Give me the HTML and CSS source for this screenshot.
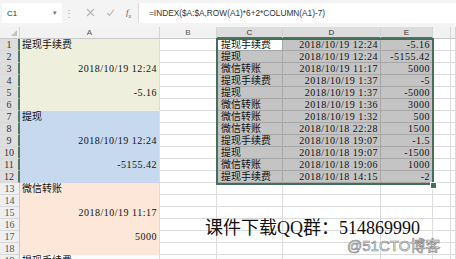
FILE: index.html
```html
<!DOCTYPE html>
<html lang="zh-CN">
<head>
    <meta charset="UTF-8">
    <meta name="viewport" content="width=device-width, initial-scale=1.0">
    <title>INDEX</title>
    <link rel="stylesheet" href="styles.css">
</head>
<body>
<div class="app">
    <div class="formula-bar">
        <div class="name-box"><span>C1</span><span class="arrow">&#9662;</span></div>
        <div class="bar-dots">&#8942;</div>
        <div class="bar-icons">
            <svg width="9" height="9" viewBox="0 0 9 9"><path d="M1 1L8 8M8 1L1 8" stroke="#b4b4b4" stroke-width="1.1" fill="none"/></svg>
            <svg width="9" height="9" viewBox="0 0 9 9"><path d="M1 5L3.5 7.5L8 1.5" stroke="#b4b4b4" stroke-width="1.1" fill="none"/></svg>
            <span class="fx">f<sub>x</sub></span>
        </div>
        <div class="formula">=INDEX($A:$A,ROW(A1)*6+2*COLUMN(A1)-7)</div>
    </div>

    <div class="sheet">
        <div class="row head">
            <div class="corner"></div>
            <div>A</div><div>B</div><div class="on">C</div><div class="on">D</div><div class="on">E</div><div></div><div></div>
        </div>
        <div class="row">
            <div class="rh on">1</div><div class="a g">提现手续费</div><div></div>
            <div class="s active">提现手续费</div><div class="s n">2018/10/19 12:24</div><div class="s n">-5.16</div><div></div><div></div>
        </div>
        <div class="row">
            <div class="rh on">2</div><div class="a g"></div><div></div>
            <div class="s">提现</div><div class="s n">2018/10/19 12:24</div><div class="s n">-5155.42</div><div></div><div></div>
        </div>
        <div class="row">
            <div class="rh on">3</div><div class="a g n">2018/10/19 12:24</div><div></div>
            <div class="s">微信转账</div><div class="s n">2018/10/19 11:17</div><div class="s n">5000</div><div></div><div></div>
        </div>
        <div class="row">
            <div class="rh on">4</div><div class="a g"></div><div></div>
            <div class="s">提现手续费</div><div class="s n">2018/10/19 1:37</div><div class="s n">-5</div><div></div><div></div>
        </div>
        <div class="row">
            <div class="rh on">5</div><div class="a g n">-5.16</div><div></div>
            <div class="s">提现</div><div class="s n">2018/10/19 1:37</div><div class="s n">-5000</div><div></div><div></div>
        </div>
        <div class="row">
            <div class="rh on">6</div><div class="a g"></div><div></div>
            <div class="s">微信转账</div><div class="s n">2018/10/19 1:36</div><div class="s n">3000</div><div></div><div></div>
        </div>
        <div class="row">
            <div class="rh on">7</div><div class="a b">提现</div><div></div>
            <div class="s">微信转账</div><div class="s n">2018/10/19 1:32</div><div class="s n">500</div><div></div><div></div>
        </div>
        <div class="row">
            <div class="rh on">8</div><div class="a b"></div><div></div>
            <div class="s">微信转账</div><div class="s n">2018/10/18 22:28</div><div class="s n">1500</div><div></div><div></div>
        </div>
        <div class="row">
            <div class="rh on">9</div><div class="a b n">2018/10/19 12:24</div><div></div>
            <div class="s">提现手续费</div><div class="s n">2018/10/18 19:07</div><div class="s n">-1.5</div><div></div><div></div>
        </div>
        <div class="row">
            <div class="rh on">10</div><div class="a b"></div><div></div>
            <div class="s">提现</div><div class="s n">2018/10/18 19:07</div><div class="s n">-1500</div><div></div><div></div>
        </div>
        <div class="row">
            <div class="rh on">11</div><div class="a b n">-5155.42</div><div></div>
            <div class="s">微信转账</div><div class="s n">2018/10/18 19:06</div><div class="s n">1000</div><div></div><div></div>
        </div>
        <div class="row">
            <div class="rh on">12</div><div class="a b"></div><div></div>
            <div class="s">提现手续费</div><div class="s n">2018/10/18 14:15</div><div class="s n">-2</div><div></div><div></div>
        </div>
        <div class="row">
            <div class="rh">13</div><div class="a p">微信转账</div><div></div><div></div><div></div><div></div><div></div><div></div>
        </div>
        <div class="row">
            <div class="rh">14</div><div class="a p"></div><div></div><div></div><div></div><div></div><div></div><div></div>
        </div>
        <div class="row">
            <div class="rh">15</div><div class="a p n">2018/10/19 11:17</div><div></div><div></div><div></div><div></div><div></div><div></div>
        </div>
        <div class="row">
            <div class="rh">16</div><div class="a p"></div><div></div><div></div><div></div><div></div><div></div><div></div>
        </div>
        <div class="row">
            <div class="rh">17</div><div class="a p n">5000</div><div></div><div></div><div></div><div></div><div></div><div></div>
        </div>
        <div class="row">
            <div class="rh">18</div><div class="a p"></div><div></div><div></div><div></div><div></div><div></div><div></div>
        </div>
        <div class="row">
            <div class="rh">19</div><div class="a">提现手续费</div><div></div><div></div><div></div><div></div><div></div><div></div>
        </div>

        <div class="selection"></div>
        <div class="handle"></div>
    </div>

    <div class="note">课件下载QQ群：514869990</div>
    <div class="mark">@51CTO博客</div>
</div>
</body>
</html>
```

FILE: styles.css
```css
body {
    margin: 0;
    background: #fff;
    font-family: "Liberation Serif", "Noto Sans CJK SC", serif;
    color: #111;
}

.app {
    position: relative;
    width: 456px;
    height: 259px;
    overflow: hidden;
}

/* formula bar */
.formula-bar {
    display: flex;
    align-items: center;
    height: 27px;
    padding: 3px 0 4px 2px;
    box-sizing: border-box;
    background: #f4f4f4;
    font-family: "Liberation Sans", sans-serif;
    font-size: 8px;
    color: #333;
}

.name-box {
    display: flex;
    align-items: center;
    justify-content: space-between;
    width: 60px;
    height: 20px;
    padding: 0 5px;
    box-sizing: border-box;
    background: #fff;
}

.arrow {
    color: #777;
    font-size: 7px;
}

.bar-dots {
    width: 14px;
    text-align: center;
    color: #aaa;
    font-size: 10px;
}

.bar-icons {
    display: flex;
    align-items: center;
    gap: 11px;
    width: 52px;
    padding-left: 10px;
}

.fx {
    font-family: "Liberation Serif", serif;
    font-style: italic;
    font-size: 9px;
    color: #555;
}

.fx sub {
    font-size: 6px;
}

.formula {
    flex: 1;
    height: 20px;
    line-height: 20px;
    padding-left: 10px;
    background: #fff;
    border-left: 1px solid #dadada;
    font-size: 8.3px;
    white-space: nowrap;
}

/* sheet */
.sheet {
    position: relative;
}

.row {
    display: grid;
    grid-template-columns: 20px 140px 57px 66px 98px 52px 18px 1fr;
    height: 12px;
}

.row > div {
    height: 12px;
    line-height: 12px;
    padding: 0 2px;
    box-sizing: border-box;
    border-right: 1px solid #dcdcdc;
    border-bottom: 1px solid #dcdcdc;
    font-size: 10px;
    white-space: nowrap;
}

.head > div {
    background: #f2f2f2;
    border-right-color: #d4d4d4;
    border-bottom-color: #c8c8c8;
    text-align: center;
    font-family: "Liberation Sans", sans-serif;
    font-size: 8px;
    color: #555;
}

.head > div.on {
    background: #dcdcdc;
    border-bottom: 2px solid #4f7a62;
    color: #333;
}

.head .corner {
    position: relative;
}

.corner::after {
    content: "";
    position: absolute;
    right: 2px;
    bottom: 2px;
    border-left: 6px solid transparent;
    border-bottom: 6px solid #c4c4c4;
}

.rh {
    background: #efefef;
    text-align: center;
    color: #555;
    border-right-color: #c8c8c8 !important;
    border-bottom-color: #d8d8d8 !important;
}

.rh.on {
    background: #dedede;
    color: #333;
    border-right: 2px solid #4f7a62 !important;
}

.a {
    border-right-color: #d8d8d8;
}

.g {
    background: #eef0dd;
    border-bottom-color: #eef0dd !important;
}

.b {
    background: #c6d9ef;
    border-bottom-color: #c6d9ef !important;
}

.p {
    background: #fde7d8;
    border-bottom-color: #fde7d8 !important;
}

.n {
    text-align: right;
    font-size: 11px;
    letter-spacing: 0.5px;
}

.s {
    background: #c4c4c4;
    border-right-color: #a6a6a6 !important;
    border-bottom-color: #a6a6a6 !important;
}

.s.active {
    background: #fff;
}

.s:not(.n) {
    padding-left: 4px;
}

/* selection frame over C1:E12 */
.selection {
    position: absolute;
    left: 216px;
    top: 11px;
    width: 218px;
    height: 147px;
    border: 2px solid #44705a;
    box-sizing: border-box;
}

.handle {
    position: absolute;
    left: 430px;
    top: 155px;
    width: 5px;
    height: 5px;
    background: #44705a;
    border: 1px solid #fff;
}

/* text laid over the picture */
.note {
    position: absolute;
    left: 205px;
    top: 218px;
    font-size: 18px;
    line-height: 20px;
    color: #111;
    white-space: nowrap;
}

.mark {
    position: absolute;
    left: 347px;
    top: 238px;
    font-family: "Liberation Sans", "Noto Sans CJK SC", sans-serif;
    font-size: 15px;
    line-height: 16px;
    color: #fff;
    -webkit-text-stroke: 0.7px #8c8c8c;
    white-space: nowrap;
}
```
